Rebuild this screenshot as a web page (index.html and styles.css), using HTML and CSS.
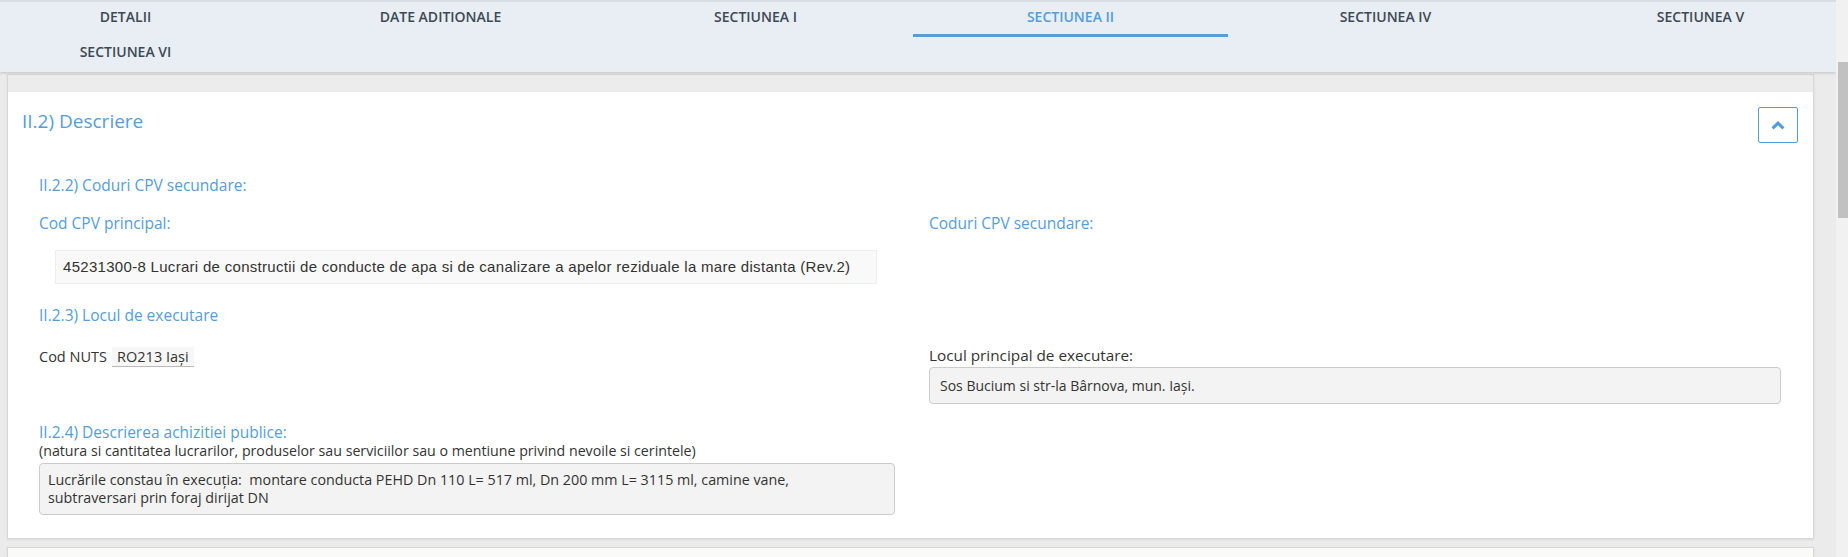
FILE: index.html
```html
<!DOCTYPE html>
<html lang="ro">

<head>
    <meta charset="UTF-8">
    <meta name="viewport" content="width=device-width, initial-scale=1.0">
    <title>Sectiunea II</title>
    <link rel="stylesheet" href="styles.css">
</head>

<body>
    <div class="page">
        <!-- taburi -->
        <nav class="tabs">
            <ul class="tab-list">
                <li>DETALII</li>
                <li>DATE ADITIONALE</li>
                <li>SECTIUNEA I</li>
                <li class="active">SECTIUNEA II</li>
                <li>SECTIUNEA IV</li>
                <li>SECTIUNEA V</li>
                <li>SECTIUNEA VI</li>
            </ul>
        </nav>

        <div class="content">
            <section class="panel">
                <div class="panel-top"></div>
                <div class="panel-head">
                    <h2>II.2) Descriere</h2>
                    <button class="collapse" type="button">
                        <svg width="14" height="9" viewBox="0 0 14 9">
                            <path d="M1.6 7.4 L7 2.2 L12.4 7.4" fill="none" stroke="#4d9be0" stroke-width="3" />
                        </svg>
                    </button>
                </div>

                <div class="panel-body">
                    <h3 class="sub indent first">II.2.2) Coduri CPV secundare:</h3>

                    <div class="cols">
                        <div>
                            <h3 class="sub indent label-row">Cod CPV principal:</h3>
                            <div class="cpv-box">45231300-8 Lucrari de constructii de conducte de apa si de canalizare a apelor reziduale la mare distanta (Rev.2)</div>
                        </div>
                        <div>
                            <h3 class="sub label-row">Coduri CPV secundare:</h3>
                        </div>
                    </div>

                    <h3 class="sub indent gap">II.2.3) Locul de executare</h3>

                    <div class="cols place">
                        <div class="indent">
                            <span class="text">Cod NUTS</span>
                            <span class="nuts">RO213 Iaşi</span>
                        </div>
                        <div class="place-main">
                            <div class="text label">Locul principal de executare:</div>
                            <div class="field">Sos Bucium si str-la Bârnova, mun. Iași.</div>
                        </div>
                    </div>

                    <div class="indent">
                        <h3 class="sub tight">II.2.4) Descrierea achizitiei publice:</h3>
                        <p class="hint">(natura si cantitatea lucrarilor, produselor sau serviciilor sau o mentiune privind nevoile si cerintele)</p>
                        <div class="field desc">Lucrările constau în execuția:&nbsp; montare conducta PEHD Dn 110 L= 517 ml, Dn 200 mm L= 3115 ml, camine vane,<br>subtraversari prin foraj dirijat DN</div>
                    </div>
                </div>
            </section>

            <section class="panel next"></section>
        </div>
    </div>

    <div class="scrollbar">
        <div class="thumb"></div>
    </div>
</body>

</html>
```

FILE: styles.css
```css
* {
    padding: 0;
    margin: 0;
    box-sizing: border-box;
}

body {
    display: flex;
    height: 557px;
    overflow: hidden;
    background: #ebebeb;
    font-family: "Open Sans", "Liberation Sans", sans-serif;
    color: #333;
}

.page {
    flex: 1;
    min-width: 0;
    height: 557px;
    overflow: hidden;
}

/* taburi */
.tabs {
    height: 72px;
    overflow: hidden;
    background: #e8eef3;
    border-top: 2px solid #d9dde1;
    box-shadow: 0 1px 3px rgba(0, 0, 0, .18);
    position: relative;
    z-index: 2;
}

.tab-list {
    list-style: none;
    display: grid;
    grid-template-columns: repeat(6, 315px);
    grid-auto-rows: 35px;
    margin-left: -32px;
}

.tab-list li {
    text-align: center;
    padding-top: 5px;
    line-height: 20px;
    font-size: 14px;
    font-weight: 600;
    color: #3d4955;
    border-bottom: 3px solid transparent;
    cursor: pointer;
}

.tab-list li.active {
    color: #549ddb;
    border-bottom-color: #549ddb;
}

/* continut */
.content {
    padding: 2px 22px 0 7px;
}

.panel {
    background: #fff;
    border: 1px solid #d8d8d8;
    box-shadow: 0 1px 2px rgba(0, 0, 0, .08);
    padding-bottom: 23px;
}

.panel-top {
    height: 17px;
    background: #ececec;
}

.panel-head {
    display: flex;
    justify-content: space-between;
    align-items: flex-start;
    padding: 15px 15px 0 14px;
}

.panel-head h2 {
    font-size: 19px;
    font-weight: 400;
    line-height: 28px;
    color: #549ddb;
}

.collapse {
    width: 40px;
    height: 36px;
    background: #fff;
    border: 1px solid #549ddb;
    border-radius: 2px;
    display: flex;
    align-items: center;
    justify-content: center;
    cursor: pointer;
}

.panel-body {
    padding: 0 15px 0 14px;
}

.sub {
    font-size: 15.5px;
    font-weight: 400;
    line-height: 22px;
    color: #549ddb;
}

.sub.first {
    margin-top: 31px;
}

.sub.label-row {
    margin-top: 16px;
}

.sub.gap {
    margin-top: 20px;
}

.sub.tight {
    margin-top: 17px;
}

.indent {
    padding-left: 17px;
}

.cols {
    display: grid;
    grid-template-columns: 907px 1fr;
}

.cpv-box {
    margin: 16px 0 0 33px;
    width: 822px;
    height: 34px;
    padding-left: 7px;
    line-height: 32px;
    font-family: "Liberation Sans", Arial, sans-serif;
    font-size: 15px;
    letter-spacing: .3px;
    color: #333;
    background: #f9f9f9;
    border: 1px solid #eeeeee;
}

.place {
    margin-top: 19px;
}

.text {
    font-size: 14.5px;
    line-height: 20px;
}

.text.label {
    font-size: 15.3px;
}

.nuts {
    display: inline-block;
    margin-left: 1px;
    padding: 0 5px;
    font-size: 14.5px;
    line-height: 19px;
    background: #f7f7f7;
    border-bottom: 1px solid #b9b9b9;
}

.place-main {
    padding-right: 17px;
}

.field {
    background: #f3f3f3;
    border: 1px solid #cccccc;
    border-radius: 4px;
    font-size: 14px;
}

.place-main .field {
    margin-top: 2px;
    height: 37px;
    line-height: 35px;
    padding-left: 10px;
}

.hint {
    font-size: 14.2px;
    line-height: 16px;
}

.desc {
    margin-top: 4px;
    width: 856px;
    padding: 7px 8px;
    font-size: 14.3px;
    line-height: 18px;
}

.panel.next {
    margin-top: 8px;
    height: 11px;
    padding: 0;
    background: #fafaf8;
}

/* bara de derulare */
.scrollbar {
    width: 12px;
    background: #f1f1f1;
    padding-left: 2px;
}

.scrollbar .thumb {
    margin-top: 62px;
    height: 156px;
    background: #c1c1c1;
}
```
